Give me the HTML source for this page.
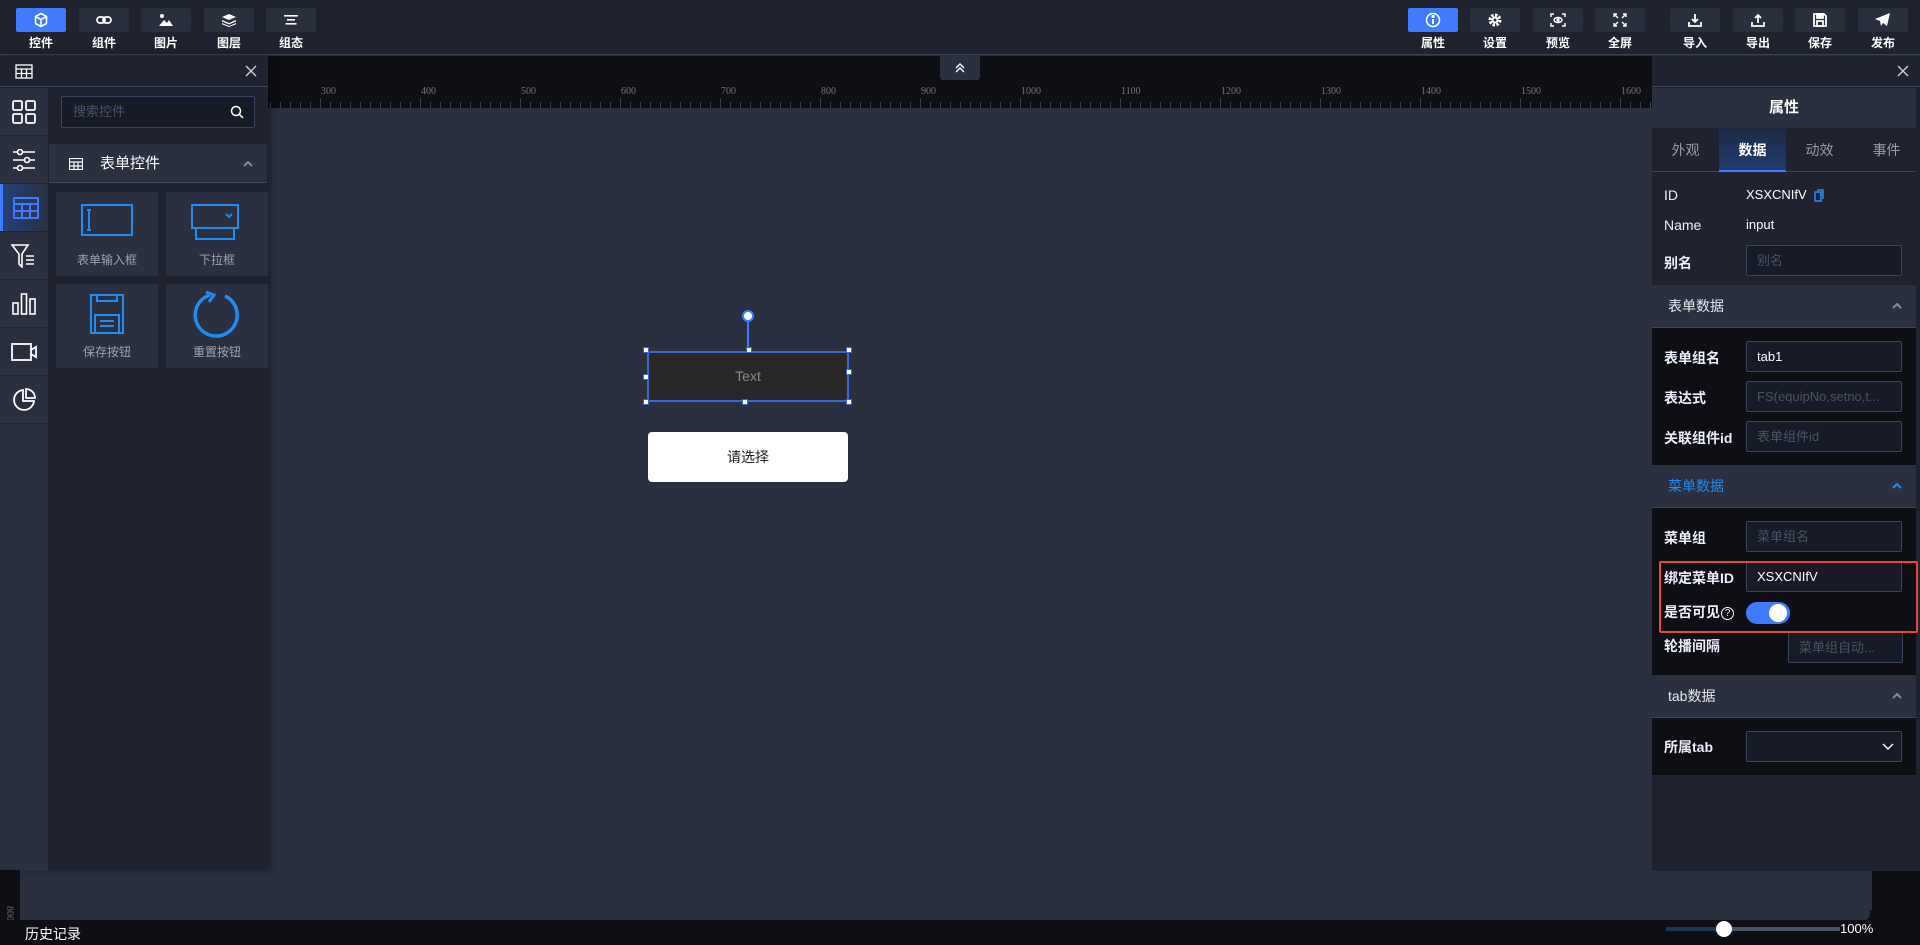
<!DOCTYPE html>
<html><head><meta charset="utf-8"><style>
*{box-sizing:border-box;margin:0;padding:0}
body{width:1920px;height:945px;overflow:hidden;background:#2a3040;font-family:"Liberation Sans","Noto Sans CJK SC",sans-serif;color:#fff;position:relative}
.abs{position:absolute}
.top{left:0;top:0;width:1920px;height:55px;background:#1f2330;border-bottom:1px solid #3a4256}
.tb{position:absolute;top:8px;width:50px;height:24px;background:#2a2f3d;border-radius:2px;display:flex;align-items:center;justify-content:center}
.tb.on{background:#3f7bff}
.tl{position:absolute;top:34px;width:50px;text-align:center;font-size:12px;font-weight:bold;color:#fff}
.ruler{left:268px;top:56px;width:1384px;height:52px;background:#0d0f14;
 background-image:repeating-linear-gradient(90deg,#3a3f4a 0 1px,transparent 1px 10px);background-size:100% 6px;background-repeat:no-repeat;background-position:2px 46px}
.rl{position:absolute;top:30px;font-family:"Liberation Serif",serif;font-size:10px;color:#777}
.mt{position:absolute;top:42px;width:1px;height:10px;background:#3a3f4a}
.lp{left:0;top:56px;width:268px;height:815px;background:#1f2330;box-shadow:4px 0 8px rgba(0,0,0,.3)}
.side{position:absolute;left:0;width:48px;height:47px;background:#2a3040;display:flex;align-items:center;justify-content:center}
.card{position:absolute;width:102px;height:84px;background:#2a3040}
.card span{position:absolute;left:0;right:0;top:59px;text-align:center;font-size:12px;color:#9aa3b5}
.rp{left:1652px;top:56px;width:268px;height:815px;background:#1f2330}
.lab{position:absolute;left:12px;font-size:14px;font-weight:bold;color:#eef}
.inp{position:absolute;left:94px;width:156px;height:31px;background:#161b27;border:1px solid #3a4660;border-radius:2px;font-size:13px;color:#4a5266;padding-left:10px;line-height:29px;white-space:nowrap;overflow:hidden}
.sec{position:absolute;left:0;width:264px;height:43px;background:#2a3040;border-bottom:1px solid #3a4660;font-size:14px;padding-left:16px;line-height:43px;color:#e8eaf0}
.sec svg{position:absolute;right:14px;top:18px}
.body{position:absolute;left:0;width:264px;background:#0d0f14}
</style></head><body>
<div class="abs top">
 <div class="tb on" style="left:16px"><svg width="16" height="16" viewBox="0 0 16 16" fill="none" stroke="#fff" stroke-width="1.6"><path d="M8 1.5l5.5 3v7L8 14.5 2.5 11.5v-7z M2.5 4.5L8 7.5l5.5-3 M8 7.5v7"/></svg></div><div class="tl" style="left:16px">控件</div>
 <div class="tb" style="left:79px"><svg width="16" height="10" viewBox="0 0 16 10" fill="none" stroke="#fff" stroke-width="1.8"><rect x="1" y="2" width="8" height="6" rx="3"/><rect x="7" y="2" width="8" height="6" rx="3"/></svg></div><div class="tl" style="left:79px">组件</div>
 <div class="tb" style="left:141px"><svg width="16" height="14" viewBox="0 0 16 14" fill="#fff"><circle cx="4" cy="3" r="2"/><path d="M1 13l5-6 3 3 2-3 4 6z"/></svg></div><div class="tl" style="left:141px">图片</div>
 <div class="tb" style="left:204px"><svg width="16" height="14" viewBox="0 0 16 14" fill="#fff"><path d="M8 1l7 3-7 3-7-3z M1 7l7 3 7-3v1.5l-7 3-7-3z M1 10l7 3 7-3v1.2l-7 2.8-7-2.8z"/></svg></div><div class="tl" style="left:204px">图层</div>
 <div class="tb" style="left:266px"><svg width="14" height="10" viewBox="0 0 14 10" fill="#fff"><rect x="0" y="0" width="14" height="1.6"/><rect x="3" y="4" width="8" height="1.6"/><rect x="1.5" y="8" width="11" height="1.6"/></svg></div><div class="tl" style="left:266px">组态</div>

 <div class="tb on" style="left:1408px"><svg width="16" height="16" viewBox="0 0 16 16" fill="none" stroke="#fff" stroke-width="1.6"><circle cx="8" cy="8" r="6.5"/><path d="M8 7v5" stroke-width="2"/><circle cx="8" cy="4.5" r=".8" fill="#fff"/></svg></div><div class="tl" style="left:1408px">属性</div>
 <div class="tb" style="left:1470px"><svg width="14" height="14" viewBox="0 0 14 14"><circle cx="7" cy="7" r="5" fill="none" stroke="#fff" stroke-width="3" stroke-dasharray="2.5 1.4"/><circle cx="7" cy="7" r="3.5" fill="#fff"/><circle cx="7" cy="7" r="1.5" fill="#2a2f3d"/></svg></div><div class="tl" style="left:1470px">设置</div>
 <div class="tb" style="left:1533px"><svg width="16" height="14" viewBox="0 0 16 14" fill="none" stroke="#fff" stroke-width="1.4"><path d="M1 4V1h3M12 1h3v3M15 10v3h-3M4 13H1v-3"/><ellipse cx="8" cy="7" rx="4" ry="2.5"/><circle cx="8" cy="7" r="1" fill="#fff"/></svg></div><div class="tl" style="left:1533px">预览</div>
 <div class="tb" style="left:1595px"><svg width="14" height="14" viewBox="0 0 14 14" fill="none" stroke="#fff" stroke-width="1.4"><path d="M1 4V1h3M10 1h3v3M13 10v3h-3M4 13H1v-3M2 2l3 3M12 2l-3 3M12 12l-3-3M2 12l3-3"/></svg></div><div class="tl" style="left:1595px">全屏</div>
 <div class="tb" style="left:1670px"><svg width="14" height="14" viewBox="0 0 14 14" fill="none" stroke="#fff" stroke-width="1.8"><path d="M7 1v8M4 6l3 3 3-3M1 9v4h12V9"/></svg></div><div class="tl" style="left:1670px">导入</div>
 <div class="tb" style="left:1733px"><svg width="14" height="14" viewBox="0 0 14 14" fill="none" stroke="#fff" stroke-width="1.8"><path d="M7 10V2M4 5l3-3 3 3M1 9v4h12V9"/></svg></div><div class="tl" style="left:1733px">导出</div>
 <div class="tb" style="left:1795px"><svg width="14" height="14" viewBox="0 0 14 14" fill="none" stroke="#fff" stroke-width="1.8"><path d="M1 1h10l2 2v10H1z"/><rect x="4" y="1" width="6" height="4" fill="#fff"/><rect x="4" y="8" width="6" height="5"/></svg></div><div class="tl" style="left:1795px">保存</div>
 <div class="tb" style="left:1858px"><svg width="16" height="14" viewBox="0 0 16 14" fill="#fff"><path d="M15 0L0 6l5 2 1 5 2-3 4 3z"/></svg></div><div class="tl" style="left:1858px">发布</div>
</div>

<div class="abs ruler">
<div class="rl" style="left:53px">300</div><div class="rl" style="left:153px">400</div><div class="rl" style="left:253px">500</div><div class="rl" style="left:353px">600</div><div class="rl" style="left:453px">700</div><div class="rl" style="left:553px">800</div><div class="rl" style="left:653px">900</div><div class="rl" style="left:753px">1000</div><div class="rl" style="left:853px">1100</div><div class="rl" style="left:953px">1200</div><div class="rl" style="left:1053px">1300</div><div class="rl" style="left:1153px">1400</div><div class="rl" style="left:1253px">1500</div><div class="rl" style="left:1353px">1600</div>
<div class="mt" style="left:52px"></div><div class="mt" style="left:152px"></div><div class="mt" style="left:252px"></div><div class="mt" style="left:352px"></div><div class="mt" style="left:452px"></div><div class="mt" style="left:552px"></div><div class="mt" style="left:652px"></div><div class="mt" style="left:752px"></div><div class="mt" style="left:852px"></div><div class="mt" style="left:952px"></div><div class="mt" style="left:1052px"></div><div class="mt" style="left:1152px"></div><div class="mt" style="left:1252px"></div><div class="mt" style="left:1352px"></div>
</div>
<div class="abs" style="left:940px;top:56px;width:40px;height:24px;background:#2a3040;border-radius:0 0 3px 3px;display:flex;align-items:center;justify-content:center"><svg width="12" height="12" viewBox="0 0 12 12" fill="none" stroke="#fff" stroke-width="1.4"><path d="M2 6l4-4 4 4M2 10l4-4 4 4"/></svg></div>

<div class="abs" style="left:747px;top:318px;width:2px;height:33px;background:#3f7bff"></div>
<div class="abs" style="left:742px;top:310px;width:12px;height:12px;border-radius:50%;background:#fff;border:2px solid #3f7bff"></div>
<div class="abs" style="left:647px;top:351px;width:202px;height:51px;background:#292826;border:2px solid #3a66d0;border-radius:3px;text-align:center;line-height:47px;font-size:14px;color:#8a8a8a">Text</div>
<div class="abs" style="left:643px;top:347px;width:6px;height:6px;background:#fff;border:1.5px solid #3a66d0"></div>
<div class="abs" style="left:746px;top:347px;width:6px;height:6px;background:#fff;border:1.5px solid #3a66d0"></div>
<div class="abs" style="left:846px;top:347px;width:6px;height:6px;background:#fff;border:1.5px solid #3a66d0"></div>
<div class="abs" style="left:643px;top:374px;width:6px;height:6px;background:#fff;border:1.5px solid #3a66d0"></div>
<div class="abs" style="left:846px;top:369px;width:6px;height:6px;background:#fff;border:1.5px solid #3a66d0"></div>
<div class="abs" style="left:643px;top:399px;width:6px;height:6px;background:#fff;border:1.5px solid #3a66d0"></div>
<div class="abs" style="left:742px;top:399px;width:6px;height:6px;background:#fff;border:1.5px solid #3a66d0"></div>
<div class="abs" style="left:846px;top:399px;width:6px;height:6px;background:#fff;border:1.5px solid #3a66d0"></div>
<div class="abs" style="left:648px;top:432px;width:200px;height:50px;background:#fff;border-radius:4px;text-align:center;line-height:50px;font-size:14px;color:#222">请选择</div>

<div class="abs lp">
 <div style="position:absolute;left:0;top:0;width:268px;height:31px;border-bottom:1px solid #3a4660;background:#1f2330">
  <svg style="position:absolute;left:15px;top:8px" width="18" height="15" viewBox="0 0 18 15" fill="none" stroke="#fff" stroke-width="1.3"><rect x="1" y="1" width="16" height="13"/><path d="M1 5h16M1 9.5h16M6.5 5v9M11.5 5v9"/></svg>
  <svg style="position:absolute;right:11px;top:9px" width="12" height="12" viewBox="0 0 12 12" stroke="#ccd" stroke-width="1.4"><path d="M1 1l10 10M11 1L1 11"/></svg>
 </div>
 <div class="side" style="top:32px"><svg width="24" height="24" viewBox="0 0 24 24" fill="none" stroke="#fff" stroke-width="1.8"><rect x="1" y="1" width="9" height="9" rx="1.5"/><rect x="14" y="1" width="9" height="9" rx="1.5"/><rect x="1" y="14" width="9" height="9" rx="1.5"/><rect x="14" y="14" width="9" height="9" rx="1.5"/></svg></div>
 <div class="side" style="top:80px"><svg width="24" height="22" viewBox="0 0 24 22" fill="none" stroke="#fff" stroke-width="1.6"><path d="M1 3h22M1 11h22M1 19h22"/><circle cx="8" cy="3" r="2.5" fill="#2a3040"/><circle cx="15" cy="11" r="2.5" fill="#2a3040"/><circle cx="8" cy="19" r="2.5" fill="#2a3040"/></svg></div>
 <div class="side" style="top:128px;background:linear-gradient(90deg,#24407a,#2a3040);border-left:3px solid #3f7bff"><svg width="26" height="22" viewBox="0 0 26 22" fill="none" stroke="#3f7bff" stroke-width="2"><rect x="1" y="1" width="24" height="20"/><path d="M1 7h24M1 14h24M9 7v14M17 7v14"/></svg></div>
 <div class="side" style="top:176px"><svg width="26" height="24" viewBox="0 0 26 24" fill="none" stroke="#fff" stroke-width="1.6"><path d="M1 1h16l-6 9v13l-3-3V10z M15 12h8M15 16h8M15 20h8"/></svg></div>
 <div class="side" style="top:224px"><svg width="24" height="22" viewBox="0 0 24 22" fill="none" stroke="#fff" stroke-width="1.6"><rect x="1" y="10" width="5" height="11"/><rect x="9.5" y="1" width="5" height="20"/><rect x="18" y="6" width="5" height="15"/></svg></div>
 <div class="side" style="top:272px"><svg width="26" height="18" viewBox="0 0 26 18" fill="none" stroke="#fff" stroke-width="1.8"><rect x="1" y="1" width="19" height="16"/><path d="M20 7l5-3v10l-5-3"/></svg></div>
 <div class="side" style="top:320px"><svg width="24" height="24" viewBox="0 0 24 24" fill="none" stroke="#fff" stroke-width="1.8"><path d="M11 2a10 10 0 1 0 11 11H11z M14 1v9h9a9 9 0 0 0-9-9z"/></svg></div>
 <div class="side" style="top:368px;height:447px"></div>

 <div style="position:absolute;left:61px;top:40px;width:194px;height:32px;border:1px solid #3a4660;background:#161b27;border-radius:2px;font-size:13px;color:#4a5266;line-height:30px;padding-left:11px">搜索控件
  <svg style="position:absolute;right:10px;top:8px" width="14" height="14" viewBox="0 0 14 14" fill="none" stroke="#fff" stroke-width="1.5"><circle cx="6" cy="6" r="4.5"/><path d="M9.5 9.5l3.5 3.5"/></svg></div>
 <div style="position:absolute;left:49px;top:88px;width:218px;height:39px;background:#2a3040;border-bottom:1px solid #3a4660;font-size:15px;line-height:39px;padding-left:51px">表单控件
  <svg style="position:absolute;left:20px;top:14px" width="14" height="12" viewBox="0 0 14 12" fill="none" stroke="#fff" stroke-width="1.2"><rect x=".5" y=".5" width="13" height="11"/><path d="M.5 4h13M.5 8h13M5 4v7.5M9 4v7.5"/></svg>
  <svg style="position:absolute;right:14px;top:17px" width="10" height="6" viewBox="0 0 10 6" fill="none" stroke="#889" stroke-width="2"><path d="M1 5l4-4 4 4"/></svg></div>
 <div class="card" style="left:56px;top:136px"><svg style="position:absolute;left:25px;top:12px" width="52" height="32" viewBox="0 0 52 32" fill="none" stroke="#1e8cf0" stroke-width="2"><rect x="1" y="1" width="50" height="30"/><path d="M8 6v20M6 6h4M6 26h4"/></svg><span>表单输入框</span></div>
 <div class="card" style="left:166px;top:136px"><svg style="position:absolute;left:25px;top:12px" width="48" height="36" viewBox="0 0 48 36" fill="none" stroke="#1e8cf0" stroke-width="2"><rect x="1" y="1" width="46" height="23"/><path d="M5 24v11h38V24M35 10l3 3 3-3"/></svg><span>下拉框</span></div>
 <div class="card" style="left:56px;top:228px"><svg style="position:absolute;left:34px;top:10px" width="34" height="40" viewBox="0 0 34 40" fill="none" stroke="#1e8cf0" stroke-width="2"><rect x="1" y="1" width="32" height="38"/><path d="M7 1v6h20V1M5 39V21h24v18M10 27h14M10 32h14"/></svg><span>保存按钮</span></div>
 <div class="card" style="left:166px;top:228px"><svg style="position:absolute;left:27px;top:6px" width="48" height="48" viewBox="0 0 48 48" fill="none" stroke="#1e8cf0" stroke-width="3.5"><path d="M32 6A21 21 0 1 1 17 5"/><path d="M13 2l8 3-5 7" stroke-width="3"/></svg><span>重置按钮</span></div>
</div>

<div class="abs" style="left:0;top:870px;width:20px;height:75px;background:#0d0f14"></div>
<div class="abs" style="left:2px;top:908px;font-family:'Liberation Serif',serif;font-size:10px;color:#666;transform:rotate(90deg)">800</div>
<div class="abs" style="left:0;top:920px;width:1920px;height:25px;background:#0d0f14"></div>
<div class="abs" style="left:1872px;top:870px;width:48px;height:50px;background:#0d0f14"></div>
<div class="abs" style="left:1652px;top:910px;width:220px;height:10px;background:#0d0f14"></div>
<div class="abs" style="left:1652px;top:910px;width:218px;height:10px;background:#2a3040;border-radius:0 0 6px 0"></div>
<div class="abs" style="left:25px;top:924px;font-size:14px;color:#fff">历史记录</div>
<div class="abs" style="left:1666px;top:927px;width:58px;height:4px;background:#1d3550"></div>
<div class="abs" style="left:1724px;top:927px;width:116px;height:4px;background:#4a5468"></div>
<div class="abs" style="left:1716px;top:921px;width:16px;height:16px;border-radius:50%;background:#fff"></div>
<div class="abs" style="left:1840px;top:921px;font-size:13px;color:#fff">100%</div>

<div class="abs rp">
 <div style="position:absolute;left:0;top:0;width:268px;height:31px;border-bottom:1px solid #3a4660"><svg style="position:absolute;right:11px;top:9px" width="12" height="12" viewBox="0 0 12 12" stroke="#ccd" stroke-width="1.4"><path d="M1 1l10 10M11 1L1 11"/></svg></div>
 <div style="position:absolute;left:0;top:32px;width:264px;height:40px;background:#2a3040;text-align:center;line-height:40px;font-size:15px;font-weight:bold">属性</div>
 <div style="position:absolute;left:0;top:72px;width:264px;height:44px;border-bottom:1px solid #3a4660;font-size:14px;color:#99a">
  <div style="position:absolute;left:0;width:67px;text-align:center;line-height:44px">外观</div>
  <div style="position:absolute;left:67px;width:67px;height:44px;text-align:center;line-height:44px;color:#fff;font-weight:bold;background:linear-gradient(#1e2a44,#1f3d6e);border-bottom:2px solid #3f7bff">数据</div>
  <div style="position:absolute;left:134px;width:67px;text-align:center;line-height:44px">动效</div>
  <div style="position:absolute;left:201px;width:67px;text-align:center;line-height:44px">事件</div>
 </div>
 <div class="lab" style="top:131px;font-weight:normal">ID</div><div style="position:absolute;left:94px;top:131px;font-size:13px">XSXCNIfV</div>
 <svg style="position:absolute;left:162px;top:133px" width="10" height="13" viewBox="0 0 10 13" fill="none" stroke="#1e8cf0" stroke-width="1.6"><rect x="1" y="3" width="6" height="9"/><path d="M3 1h6v9"/></svg>
 <div class="lab" style="top:161px;font-weight:normal">Name</div><div style="position:absolute;left:94px;top:161px;font-size:13px">input</div>
 <div class="lab" style="top:197px">别名</div><div class="inp" style="top:189px">别名</div>
 <div class="sec" style="top:229px">表单数据<svg width="10" height="6" viewBox="0 0 10 6" fill="none" stroke="#889" stroke-width="2"><path d="M1 5l4-4 4 4"/></svg></div>
 <div class="body" style="top:272px;height:137px">
  <div class="lab" style="top:20px">表单组名</div><div class="inp" style="top:13px;color:#fff">tab1</div>
  <div class="lab" style="top:60px">表达式</div><div class="inp" style="top:53px">FS(equipNo,setno,t...</div>
  <div class="lab" style="top:100px">关联组件id</div><div class="inp" style="top:93px">表单组件id</div>
 </div>
 <div class="sec" style="top:409px;color:#1e8cf0">菜单数据<svg width="10" height="6" viewBox="0 0 10 6" fill="none" stroke="#1e8cf0" stroke-width="2"><path d="M1 5l4-4 4 4"/></svg></div>
 <div class="body" style="top:452px;height:167px">
  <div class="lab" style="top:20px">菜单组</div><div class="inp" style="top:13px">菜单组名</div>
  <div class="lab" style="top:60px">绑定菜单ID</div><div class="inp" style="top:53px;color:#fff">XSXCNIfV</div>
  <div class="lab" style="top:94px">是否可见<span style="font-weight:normal;border:1px solid #fff;border-radius:50%;display:inline-block;width:13px;height:13px;line-height:12px;text-align:center;font-size:10px;margin-left:1px;vertical-align:1px">?</span></div>
  <div style="position:absolute;left:94px;top:94px;width:44px;height:22px;border-radius:11px;background:#3f7bff"><div style="position:absolute;right:3px;top:2px;width:18px;height:18px;border-radius:50%;background:#fff"></div></div>
  <div class="lab" style="top:128px">轮播间隔</div><div class="inp" style="top:124px;left:136px;width:115px">菜单组自动...</div>
 </div>
 <div style="position:absolute;left:7px;top:505px;width:259px;height:72px;border:2px solid #e8453c;border-radius:2px"></div>
 <div class="sec" style="top:619px">tab数据<svg width="10" height="6" viewBox="0 0 10 6" fill="none" stroke="#889" stroke-width="2"><path d="M1 5l4-4 4 4"/></svg></div>
 <div class="body" style="top:662px;height:57px">
  <div class="lab" style="top:19px">所属tab</div><div class="inp" style="top:13px"></div>
  <svg style="position:absolute;left:230px;top:25px" width="12" height="8" viewBox="0 0 12 8" fill="none" stroke="#fff" stroke-width="1.4"><path d="M1 1l5 5 5-5"/></svg>
 </div>
</div>
</body></html>
